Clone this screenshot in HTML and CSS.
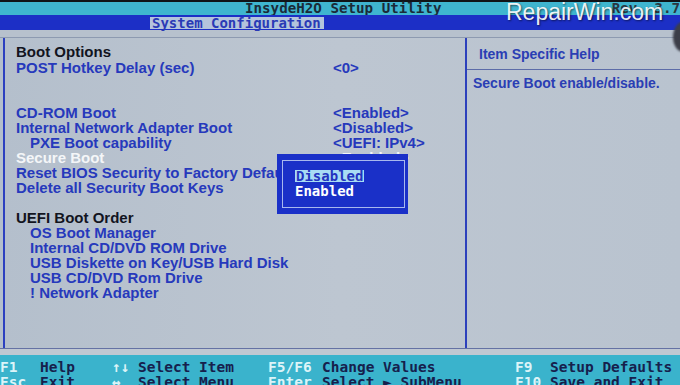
FILE: index.html
```html
<!DOCTYPE html>
<html>
<head>
<meta charset="utf-8">
<link rel="stylesheet" href="styles.css">
</head>
<body>
<div class="screen">
  <div class="topstrip"></div>
  <div class="titlebar">
    <span class="title">InsydeH2O Setup Utility</span>
    <span class="rev">Rev. 3.7</span>
  </div>
  <div class="menubar">
    <span class="tab">System Configuration</span>
  </div>
  <div class="main">
    <div class="left">
      <div class="row head first">Boot Options</div>
      <div class="row"><span class="lbl">POST Hotkey Delay (sec)</span><span class="val">&lt;0&gt;</span></div>
      <div class="blank2"></div>
      <div class="row"><span class="lbl">CD-ROM Boot</span><span class="val">&lt;Enabled&gt;</span></div>
      <div class="row"><span class="lbl">Internal Network Adapter Boot</span><span class="val">&lt;Disabled&gt;</span></div>
      <div class="row"><span class="lbl ind">PXE Boot capability</span><span class="val">&lt;UEFI: IPv4&gt;</span></div>
      <div class="row sel"><span class="lbl">Secure Boot</span><span class="val">&lt;Enabled&gt;</span></div>
      <div class="row"><span class="lbl">Reset BIOS Security to Factory Default</span></div>
      <div class="row"><span class="lbl">Delete all Security Boot Keys</span></div>
      <div class="blank1"></div>
      <div class="row head">UEFI Boot Order</div>
      <div class="row"><span class="lbl ind">OS Boot Manager</span></div>
      <div class="row"><span class="lbl ind">Internal CD/DVD ROM Drive</span></div>
      <div class="row"><span class="lbl ind">USB Diskette on Key/USB Hard Disk</span></div>
      <div class="row"><span class="lbl ind">USB CD/DVD Rom Drive</span></div>
      <div class="row"><span class="lbl ind">! Network Adapter</span></div>
    </div>
    <div class="right">
      <div class="helphead">Item Specific Help</div>
      <div class="helptext">Secure Boot enable/disable.</div>
    </div>
  </div>
  <div class="band"></div>
  <div class="footer">
    <span class="k">F1</span><span class="d">Help</span>
    <span class="k">&#8593;&#8595;</span><span class="d">Select Item</span>
    <span class="k">F5/F6</span><span class="d">Change Values</span>
    <span class="k">F9</span><span class="d">Setup Defaults</span>
    <span class="k">Esc</span><span class="d">Exit</span>
    <span class="k">&#8596;</span><span class="d">Select Menu</span>
    <span class="k">Enter</span><span class="d">Select &#9658; SubMenu</span>
    <span class="k">F10</span><span class="d">Save and Exit</span>
  </div>

  <div class="popup">
    <div class="popin">
      <div class="opt"><span class="hl">Disabled</span></div>
      <div class="opt">Enabled</div>
    </div>
  </div>
  <div class="watermark">RepairWin.com</div>
  <div class="vignette"></div>
</div>
</body>
</html>
```

FILE: styles.css
```css
html, body {
  margin: 0;
  padding: 0;
}
body {
  width: 680px;
  height: 385px;
  overflow: hidden;
  background: #b7c1cd;
}
.screen {
  position: relative;
  width: 680px;
  height: 385px;
  display: flex;
  flex-direction: column;
  font-family: "Liberation Sans", Arial, sans-serif;
  font-weight: bold;
}
.topstrip {
  height: 2px;
  background: #101418;
}
.titlebar {
  height: 13px;
  background: #3fb5cf;
  display: flex;
  font-family: "DejaVu Sans Mono", monospace;
  font-size: 14.2px;
  line-height: 13px;
  color: #1a2a38;
  white-space: nowrap;
}
.title {
  margin-left: 245px;
}
.rev {
  margin-left: auto;
  margin-right: 0;
  color: #2a3640;
}
.menubar {
  height: 15px;
  background: #1c2fc6;
  display: flex;
}
.tab {
  margin-left: 150px;
  margin-top: 2px;
  width: 172px;
  padding-left: 2px;
  height: 12px;
  line-height: 12px;
  background: #b4c4dc;
  color: #2a3ab6;
  font-family: "DejaVu Sans Mono", monospace;
  font-size: 14px;
  white-space: nowrap;
}
.main {
  height: 310px;
  margin-top: 7px;
  display: flex;
  border-top: 1px solid #8d9ab0;
  border-bottom: 1px solid #6572a4;
  background: linear-gradient(90deg, #b4bfcc 0%, #bdc6d1 50%, #b9c3cf 100%);
}
.left {
  margin-left: 3px;
  width: 449px;
  padding: 6px 0 0 11px;
  border-left: 2px solid #2c40c0;
  border-right: 2px solid #2c40bc;
  font-size: 15px;
  color: #2639bc;
}
.row {
  display: flex;
  height: 15px;
  line-height: 15px;
  white-space: nowrap;
}
.row.first {
  margin-bottom: 1px;
}
.head {
  color: #12141e;
}
.lbl {
  width: 317px;
  flex: none;
}
.ind {
  padding-left: 14px;
  width: 303px;
}
.sel {
  color: #f4f6f8;
}
.blank2 {
  height: 30px;
}
.blank1 {
  height: 15px;
}
.right {
  flex: 1;
  color: #2a3eb4;
  font-size: 14px;
}
.helphead {
  line-height: 16px;
  padding: 8px 0 7px 12px;
  border-bottom: 1px solid #5c6ca8;
}
.helptext {
  line-height: 16px;
  padding: 5px 0 0 6px;
}
.band {
  height: 6px;
  background: #c0c8d2;
}
.footer {
  flex: 1;
  background: #3ab3cc;
  display: grid;
  grid-template-columns: 40px 72px 26px 130px 54px 193px 35px auto;
  grid-auto-rows: 15px;
  padding-top: 5px;
  font-family: "DejaVu Sans Mono", monospace;
  font-size: 14.5px;
  line-height: 15px;
  white-space: nowrap;
  overflow: hidden;
}
.k {
  color: #dcf4f8;
}
.d {
  color: #16204c;
}
.popup {
  position: absolute;
  left: 277px;
  top: 154px;
  width: 123px;
  height: 50px;
  padding: 6px 3px 4px 5px;
  background: #1a30c8;
}
.popin {
  height: 48px;
  border: 1px solid #a8b8ee;
  padding: 9px 0 0 12px;
  box-sizing: border-box;
  font-family: "DejaVu Sans Mono", monospace;
  font-size: 14px;
  color: #ffffff;
}
.opt {
  height: 12px;
  line-height: 12px;
  margin-bottom: 3px;
}
.hl {
  display: inline-block;
  background: #a8dcf4;
  color: #2434c0;
  padding: 0 1px;
}
.watermark {
  position: absolute;
  left: 506px;
  top: 1px;
  font-family: "Liberation Sans", Arial, sans-serif;
  font-weight: normal;
  font-size: 23px;
  line-height: 23px;
  color: rgba(255, 255, 255, 0.92);
  text-shadow: 1px 1px 2px rgba(0, 0, 0, 0.55);
}
.vignette {
  position: absolute;
  left: 673px;
  top: 22px;
  width: 20px;
  height: 30px;
  border-radius: 50%;
  background: #3c3e48;
  filter: blur(1px);
}
```
